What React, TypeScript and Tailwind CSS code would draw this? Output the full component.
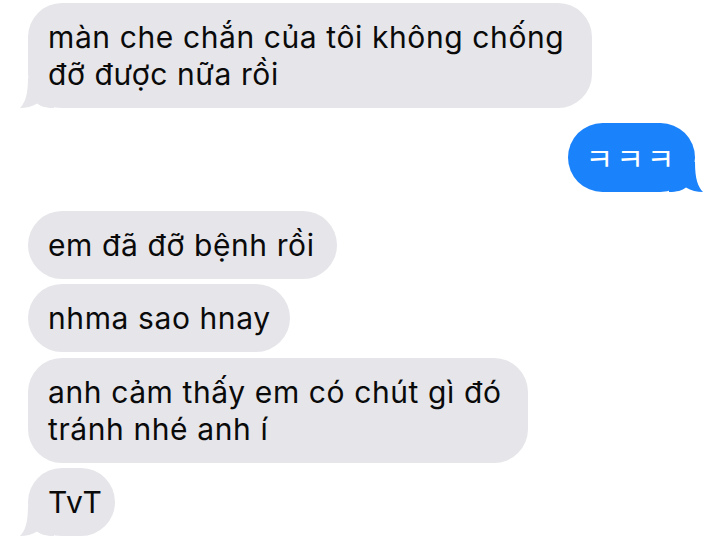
import React from 'react';

const grey = '#e5e5ea';
const blue = '#1a82fb';

function LeftTail() {
  return (
    <svg className="absolute left-[-8px] bottom-0" width="34" height="30" viewBox="0 0 34 30">
      <path d="M8 0 C8 17 5 25 0 30 C6 30 12 28.5 17 25.5 C21 28.5 26 30 34 30 L34 0 Z" fill={grey} />
    </svg>
  );
}

function RightTail() {
  return (
    <svg className="absolute right-[-8px] bottom-0" width="34" height="30" viewBox="0 0 34 30">
      <path d="M26 0 C26 17 29 25 34 30 C28 30 22 28.5 17 25.5 C13 28.5 8 30 0 30 L0 0 Z" fill={blue} />
    </svg>
  );
}

function Received({ children, tail, className = '' }: { children: React.ReactNode; tail?: boolean; className?: string }) {
  return (
    <div className={`relative self-start rounded-[34px] bg-[#e5e5ea] pl-5 pt-[16px] pb-[15px] text-[#0a0a0a] ${className}`}>
      {tail && <LeftTail />}
      <span className="relative">{children}</span>
    </div>
  );
}

export default function App() {
  return (
    <div
      className="w-[720px] h-[540px] overflow-hidden bg-white flex flex-col pl-[28px] pr-[25px] pt-[3px] text-[30px] leading-[37px] tracking-[0.6px]"
      style={{ fontFamily: 'Inter, "Noto Sans", sans-serif' }}
    >
      <Received tail className="w-[564px]">
        màn che chắn của tôi không chống
        <br />
        đỡ được nữa rồi
      </Received>

      <div className="relative self-end mt-[15px] rounded-[35px] bg-[#1a82fb] h-[69px] w-[127px] flex items-center justify-center text-white">
        <RightTail />
        <span className="relative text-[30px] tracking-[3px]" style={{ fontFamily: '"Noto Sans CJK KR", sans-serif' }}>
          ㅋㅋㅋ
        </span>
      </div>

      <Received className="mt-[19px] pr-[22px]">em đã đỡ bệnh rồi</Received>
      <Received className="mt-[5px] pr-[19px]">nhma sao hnay</Received>
      <Received className="mt-[6px] w-[500px]">
        anh cảm thấy em có chút gì đó
        <br />
        tránh nhé anh í
      </Received>
      <Received tail className="mt-[5px] pr-[12px]">TvT</Received>
    </div>
  );
}
